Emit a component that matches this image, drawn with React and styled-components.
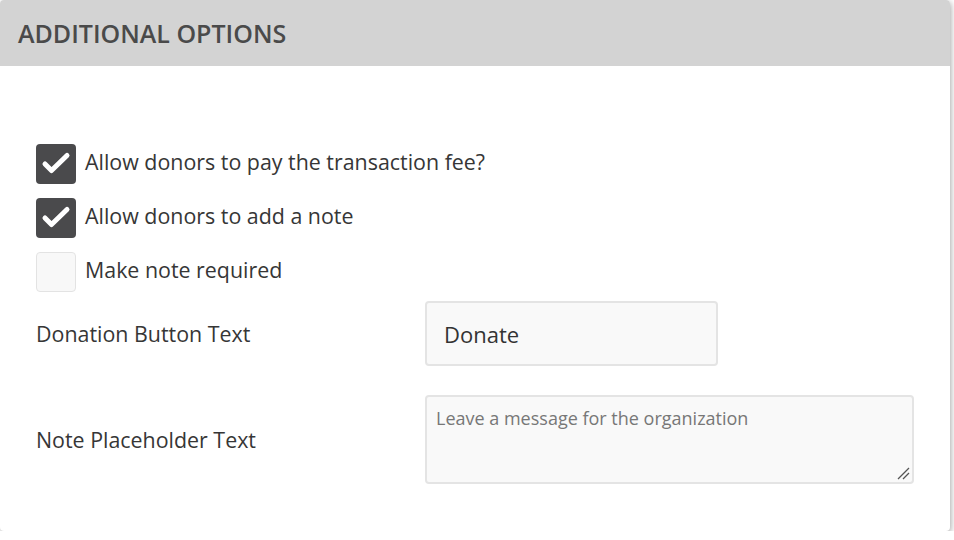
import React from "react";
import styled, { createGlobalStyle } from "styled-components";

const Global = createGlobalStyle`
  html, body { margin: 0; padding: 0; background: #ffffff; }
  body { font-family: "Open Sans", "Noto Sans", sans-serif; }
  * { box-sizing: border-box; }
`;

const Card = styled.section`
  width: 950px;
  height: 531px;
  background: #ffffff;
  border-radius: 4px;
  box-shadow: 1px 2px 6px rgba(0, 0, 0, 0.35);
  overflow: hidden;
  display: flex;
  flex-direction: column;
`;

const Header = styled.header`
  height: 66px;
  background: #d3d3d3;
  display: flex;
  align-items: center;
  padding-left: 18px;
  padding-bottom: 1px;
`;

const Title = styled.h2`
  margin: 0;
  font-size: 25px;
  font-weight: 600;
  color: #4a4a4a;
`;

const Body = styled.div`
  padding: 78px 36px 0 36px;
  display: flex;
  flex-direction: column;
`;

const CheckRow = styled.label`
  display: flex;
  align-items: center;
  gap: 9px;
  height: 40px;
  margin-bottom: 14px;
  font-size: 21.4px;
  line-height: 1;
  color: #363636;
`;

const LabelText = styled.span`
  position: relative;
  top: -2px;
`;

const Box = styled.span`
  width: 40px;
  height: 40px;
  border-radius: 4px;
  flex: none;
  display: flex;
  align-items: center;
  justify-content: center;
  background: ${(p) => (p.$checked ? "#4a4a4c" : "#f8f8f8")};
  border: ${(p) => (p.$checked ? "none" : "1.5px solid #e3e3e3")};
`;

const FieldRow = styled.div`
  display: flex;
  align-items: center;
  margin-top: ${(p) => p.$top}px;
`;

const FieldLabel = styled.span`
  width: 389px;
  flex: none;
  font-size: 21.4px;
  color: #363636;
`;

const TextInput = styled.div`
  width: 293px;
  height: 65px;
  background: #f9f9f9;
  border: 2px solid #e4e4e4;
  border-radius: 4px;
  display: flex;
  align-items: center;
  padding-left: 17px;
  font-size: 22px;
  color: #333333;
`;

const TextArea = styled.div`
  position: relative;
  width: 490px;
  height: 89px;
  background: #f9f9f9;
  border: 2px solid #e4e4e4;
  border-radius: 4px;
  padding: 9px 9px;
  font-size: 18px;
  color: #777777;
`;

const Grip = styled.svg`
  position: absolute;
  right: 2px;
  bottom: 2px;
`;

const Check = () => (
  <svg width="40" height="40" viewBox="0 0 40 40">
    <path
      d="M9 20 L15.5 26.5 L31 11.5"
      fill="none"
      stroke="#ffffff"
      strokeWidth="5"
      strokeLinecap="round"
      strokeLinejoin="round"
    />
  </svg>
);

const items = [
  { label: "Allow donors to pay the transaction fee?", checked: true },
  { label: "Allow donors to add a note", checked: true },
  { label: "Make note required", checked: false },
];

export default function App() {
  return (
    <>
      <Global />
      <Card>
        <Header>
          <Title>ADDITIONAL OPTIONS</Title>
        </Header>
        <Body>
          {items.map((it) => (
            <CheckRow key={it.label}>
              <Box $checked={it.checked}>{it.checked && <Check />}</Box>
              <LabelText>{it.label}</LabelText>
            </CheckRow>
          ))}
          <FieldRow $top={-5}>
            <FieldLabel>Donation Button Text</FieldLabel>
            <TextInput>Donate</TextInput>
          </FieldRow>
          <FieldRow $top={29}>
            <FieldLabel>Note Placeholder Text</FieldLabel>
            <TextArea>
              Leave a message for the organization
              <Grip width="14" height="14" viewBox="0 0 14 14">
                <path d="M2 13 L13 2 M7 13 L13 7" stroke="#555" strokeWidth="1.3" />
              </Grip>
            </TextArea>
          </FieldRow>
        </Body>
      </Card>
    </>
  );
}
